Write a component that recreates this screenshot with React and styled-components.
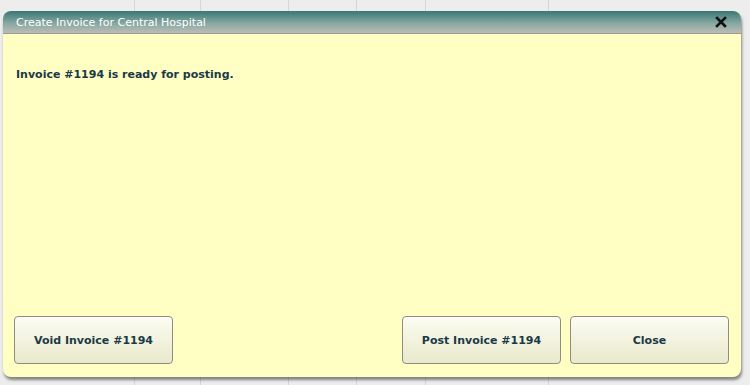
import React from "react";
import styled, { createGlobalStyle } from "styled-components";

const GlobalStyle = createGlobalStyle`
  html, body {
    margin: 0;
    padding: 0;
    width: 750px;
    height: 385px;
    overflow: hidden;
    background: #ededed;
    font-family: "DejaVu Sans", Verdana, sans-serif;
  }
`;

const columns = [134, 200, 288, 356, 425, 548];

function App() {
  return (
    <Page>
      <GlobalStyle />
      <Grid>
        {columns.map((x, i) => (
          <GridLine key={i} style={{ left: x }} />
        ))}
      </Grid>
      <Dialog>
        <TitleBar>
          <Title>Create Invoice for Central Hospital</Title>
          <CloseX aria-label="close">
            <svg width="12" height="12" viewBox="0 0 12 12">
              <path d="M2 2 L10 10 M10 2 L2 10" stroke="#111" strokeWidth="2.6" strokeLinecap="square" />
            </svg>
          </CloseX>
        </TitleBar>
        <Body>
          <Message>Invoice #1194 is ready for posting.</Message>
          <Footer>
            <Button>Void Invoice #1194</Button>
            <Spacer />
            <Button>Post Invoice #1194</Button>
            <Button>Close</Button>
          </Footer>
        </Body>
      </Dialog>
    </Page>
  );
}

export default App;

const Page = styled.div`
  position: relative;
  width: 750px;
  height: 385px;
  padding: 11px 9px 8px 3px;
  box-sizing: border-box;
  display: flex;
`;

const Grid = styled.div`
  position: absolute;
  inset: 0;
`;

const GridLine = styled.div`
  position: absolute;
  top: 0;
  bottom: 0;
  width: 1px;
  background: #d6d6d6;
`;

const Dialog = styled.div`
  position: relative;
  flex: 1;
  display: flex;
  flex-direction: column;
  border-radius: 8px;
  background: #ffffc4;
  box-shadow: 1px 3px 3px rgba(0, 0, 0, 0.45);
  overflow: hidden;
`;

const TitleBar = styled.div`
  height: 22px;
  display: flex;
  align-items: center;
  padding: 0 14px 0 13px;
  background: linear-gradient(#3a7773, #86a7a2 55%, #bcbdb4);
  border-bottom: 1px solid #9a9a92;
`;

const Title = styled.div`
  flex: 1;
  color: #ffffff;
  font-size: 11px;
  font-family: "DejaVu Sans", Verdana, sans-serif;
`;

const CloseX = styled.div`
  width: 12px;
  height: 12px;
  display: flex;
`;

const Body = styled.div`
  flex: 1;
  display: flex;
  flex-direction: column;
  padding: 34px 12px 13px 11px;
`;

const Message = styled.div`
  flex: 1;
  padding-left: 2px;
  color: #1b3a47;
  font-size: 11px;
  font-weight: bold;
`;

const Footer = styled.div`
  display: flex;
  gap: 9px;
`;

const Spacer = styled.div`
  flex: 1;
`;

const Button = styled.button`
  width: 159px;
  height: 48px;
  border: 1px solid #8d8d84;
  border-radius: 4px;
  background: linear-gradient(#fcfcf2, #e9e9cc);
  box-shadow: inset 0 1px 0 #ffffff;
  color: #1b3a47;
  font-family: "DejaVu Sans", Verdana, sans-serif;
  font-size: 11px;
  font-weight: bold;
  cursor: pointer;
`;
